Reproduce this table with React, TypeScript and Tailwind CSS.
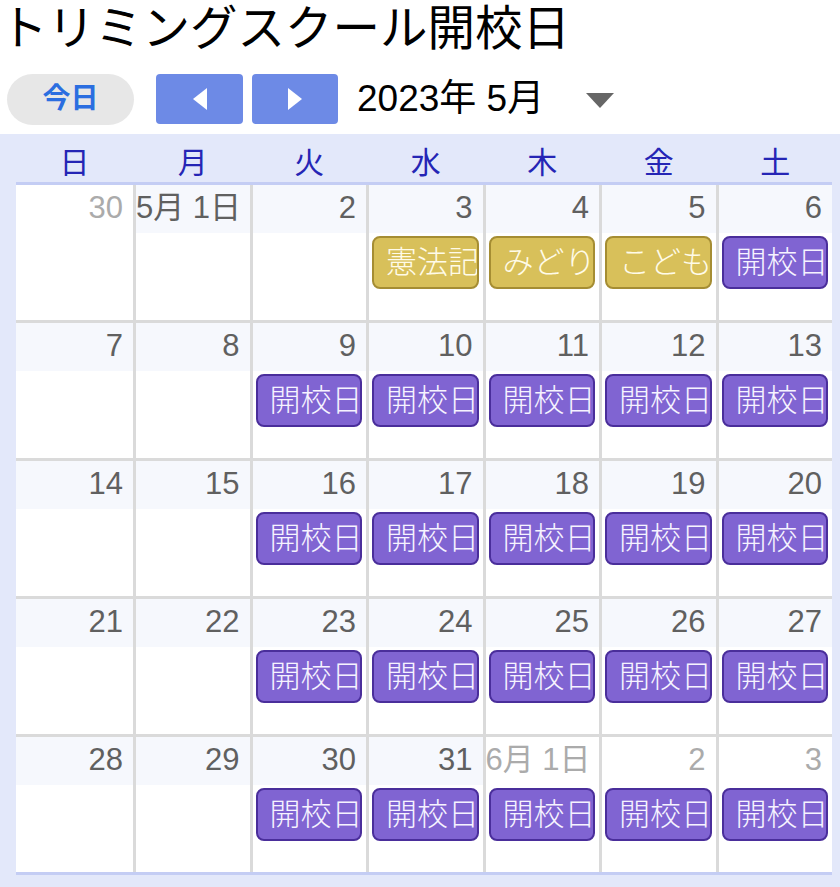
import React from "react";

type Ev = { label: string; kind: "y" | "p" };
type Day = { label: string; cur: boolean; ev?: Ev };

const P: Ev = { label: "開校日", kind: "p" };

const rows: Day[][] = [
  [
    { label: "30", cur: false },
    { label: "5月 1日", cur: true },
    { label: "2", cur: true },
    { label: "3", cur: true, ev: { label: "憲法記念日", kind: "y" } },
    { label: "4", cur: true, ev: { label: "みどりの日", kind: "y" } },
    { label: "5", cur: true, ev: { label: "こどもの日", kind: "y" } },
    { label: "6", cur: true, ev: P },
  ],
  [
    { label: "7", cur: true },
    { label: "8", cur: true },
    { label: "9", cur: true, ev: P },
    { label: "10", cur: true, ev: P },
    { label: "11", cur: true, ev: P },
    { label: "12", cur: true, ev: P },
    { label: "13", cur: true, ev: P },
  ],
  [
    { label: "14", cur: true },
    { label: "15", cur: true },
    { label: "16", cur: true, ev: P },
    { label: "17", cur: true, ev: P },
    { label: "18", cur: true, ev: P },
    { label: "19", cur: true, ev: P },
    { label: "20", cur: true, ev: P },
  ],
  [
    { label: "21", cur: true },
    { label: "22", cur: true },
    { label: "23", cur: true, ev: P },
    { label: "24", cur: true, ev: P },
    { label: "25", cur: true, ev: P },
    { label: "26", cur: true, ev: P },
    { label: "27", cur: true, ev: P },
  ],
  [
    { label: "28", cur: true },
    { label: "29", cur: true },
    { label: "30", cur: true, ev: P },
    { label: "31", cur: true, ev: P },
    { label: "6月 1日", cur: false, ev: P },
    { label: "2", cur: false, ev: P },
    { label: "3", cur: false, ev: P },
  ],
];

const weekdays = ["日", "月", "火", "水", "木", "金", "土"];

function Chip({ ev }: { ev: Ev }) {
  const cls =
    ev.kind === "y"
      ? "bg-[#d8c05a] border-[#a58d33] text-[#fffbe8]"
      : "bg-[#8064d2] border-[#4a2e9b] text-[#f6f3ff]";
  return (
    <div
      className={`mt-[3px] ml-[3px] mr-[4px] h-[53px] rounded-[8px] border-2 overflow-hidden whitespace-nowrap pl-[12px] text-[31px] leading-[50px] font-light ${cls}`}
    >
      {ev.label}
    </div>
  );
}

export default function App() {
  return (
    <div
      className="w-[840px] h-[887px] bg-white overflow-hidden flex flex-col"
      style={{ fontFamily: '"Liberation Sans", "Noto Sans CJK JP", sans-serif' }}
    >
      <h1 className="h-[64px] text-[47.5px] leading-[58px] text-black whitespace-nowrap">
        トリミングスクール開校日
      </h1>
      <div className="h-[70px] flex items-center">
        <button className="ml-[7px] w-[127px] h-[51px] rounded-full bg-[#e7e7e7] text-[#2b6ee0] text-[28px] font-bold flex items-center justify-center">
          今日
        </button>
        <div className="ml-[22px] flex gap-[9px]">
          <button className="w-[87px] h-[50px] rounded-[4px] bg-[#6d8ae6] flex items-center justify-center">
            <svg width="16" height="24" viewBox="0 0 16 24">
              <polygon points="15,1 15,23 1,12" fill="#fff" />
            </svg>
          </button>
          <button className="w-[86px] h-[50px] rounded-[4px] bg-[#6d8ae6] flex items-center justify-center">
            <svg width="16" height="24" viewBox="0 0 16 24">
              <polygon points="1,1 1,23 15,12" fill="#fff" />
            </svg>
          </button>
        </div>
        <div className="ml-[19px] text-[37px] text-black whitespace-nowrap">2023年 5月</div>
        <svg className="ml-[42px] mt-[2px]" width="28" height="15" viewBox="0 0 28 15">
          <polygon points="0,0 28,0 14,15" fill="#666" />
        </svg>
      </div>
      <div className="flex-1 bg-[#e3e8fa] px-[16px]">
        <div className="w-[816px] grid grid-cols-[117px_repeat(6,1fr)] gap-x-[3px] h-[51px] border-b-[3px] border-[#c4cdf4]">
          {weekdays.map((w) => (
            <div key={w} className="flex items-center justify-center text-[30px] text-[#2525b5] pt-[6px]">
              {w}
            </div>
          ))}
        </div>
        <div className="w-[816px] grid grid-cols-[117px_repeat(6,1fr)] grid-rows-[repeat(5,135px)] gap-[3px] bg-[#dadada] border-b-[3px] border-[#c4cdf4]">
          {rows.flat().map((d, i) => (
            <div key={i} className="bg-white overflow-hidden">
              <div
                className={`h-[48px] pr-[10px] text-right whitespace-nowrap text-[31px] leading-[46px] ${
                  d.cur ? "bg-[#f6f8fd] text-[#606060]" : "bg-white text-[#ababab]"
                }`}
              >
                {d.label}
              </div>
              {d.ev && <Chip ev={d.ev} />}
            </div>
          ))}
        </div>
      </div>
    </div>
  );
}
